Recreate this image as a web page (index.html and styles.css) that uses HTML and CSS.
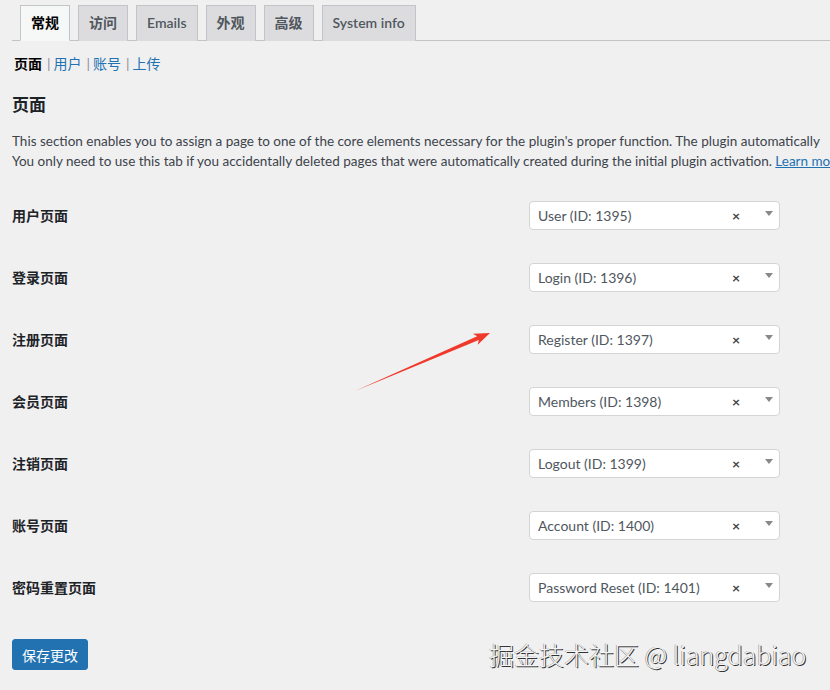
FILE: index.html
```html
<!DOCTYPE html>
<html lang="zh-CN">
<head>
    <meta charset="UTF-8">
    <title>设置</title>
    <link rel="stylesheet" href="styles.css">
</head>
<body>
<div class="wrap">
    <nav class="nav-tabs">
        <a class="nav-tab active">常规</a>
        <a class="nav-tab">访问</a>
        <a class="nav-tab">Emails</a>
        <a class="nav-tab">外观</a>
        <a class="nav-tab">高级</a>
        <a class="nav-tab">System info</a>
    </nav>

    <ul class="subsubsub">
        <li class="current">页面</li>
        <li><span class="sep">|</span><a href="#">用户</a></li>
        <li><span class="sep">|</span><a href="#">账号</a></li>
        <li><span class="sep">|</span><a href="#">上传</a></li>
    </ul>

    <h2 class="section-title">页面</h2>
    <p class="section-desc">This section enables you to assign a page to one of the core elements necessary for the plugin's proper function. The plugin automatically<br>You only need to use this tab if you accidentally deleted pages that were automatically created during the initial plugin activation. <a href="#">Learn more</a></p>

    <div class="form-table">
        <div class="row">
            <label>用户页面</label>
            <div class="select"><span class="value">User (ID: 1395)</span><span class="clear">×</span><span class="caret"></span></div>
        </div>
        <div class="row">
            <label>登录页面</label>
            <div class="select"><span class="value">Login (ID: 1396)</span><span class="clear">×</span><span class="caret"></span></div>
        </div>
        <div class="row">
            <label>注册页面</label>
            <div class="select"><span class="value">Register (ID: 1397)</span><span class="clear">×</span><span class="caret"></span></div>
        </div>
        <div class="row">
            <label>会员页面</label>
            <div class="select"><span class="value">Members (ID: 1398)</span><span class="clear">×</span><span class="caret"></span></div>
        </div>
        <div class="row">
            <label>注销页面</label>
            <div class="select"><span class="value">Logout (ID: 1399)</span><span class="clear">×</span><span class="caret"></span></div>
        </div>
        <div class="row">
            <label>账号页面</label>
            <div class="select"><span class="value">Account (ID: 1400)</span><span class="clear">×</span><span class="caret"></span></div>
        </div>
        <div class="row">
            <label>密码重置页面</label>
            <div class="select"><span class="value">Password Reset (ID: 1401)</span><span class="clear">×</span><span class="caret"></span></div>
        </div>
    </div>

    <button class="button-primary">保存更改</button>
</div>

<!-- annotation arrow -->
<svg class="annot-arrow" width="830" height="690" viewBox="0 0 830 690">
    <polygon points="355,391 477.2,336.3 472.9,333.8 490,333 477.7,344.8 478.8,339.9" fill="#f0382b"/>
</svg>

<div class="watermark">掘金技术社区 @ liangdabiao</div>
</body>
</html>
```

FILE: styles.css
```css
html, body {
    margin: 0;
    padding: 0;
    overflow: hidden;
}
body {
    background: #f0f0f1;
    font-family: Lato, "Noto Sans CJK SC", sans-serif;
    color: #1d2327;
    font-size: 13px;
    width: 830px;
    height: 690px;
    position: relative;
}
.wrap {
    padding: 0 0 0 12px;
}
a {
    color: #2271b1;
}
.nav-tabs {
    display: flex;
    padding: 5px 0 0 8px;
    border-bottom: 1px solid #c3c4c7;
    height: 35px;
}
.nav-tab {
    display: block;
    box-sizing: border-box;
    height: 36px;
    padding: 5px 10px;
    margin-right: 8px;
    font-size: 14px;
    line-height: 24px;
    font-weight: 600;
    color: #50575e;
    background: #dcdcde;
    border: 1px solid #c3c4c7;
    border-bottom: none;
}
.nav-tab.active {
    background: #f6f7f7;
    color: #000;
    border-bottom: 1px solid #f6f7f7;
}
.subsubsub {
    list-style: none;
    display: flex;
    margin: 13px 0 0 2px;
    padding: 0;
    font-size: 14px;
    line-height: 20px;
}
.subsubsub li {
    margin-right: 5px;
}
.subsubsub .current {
    font-weight: 700;
    color: #000;
}
.subsubsub a {
    text-decoration: none;
}
.subsubsub .sep {
    color: #8c8f94;
    margin-right: 3px;
}
.section-title {
    font-size: 17px;
    line-height: 24px;
    font-weight: 700;
    margin: 19px 0 14px;
}
.section-desc {
    margin: 0;
    font-size: 13.5px;
    line-height: 20px;
    white-space: nowrap;
    color: #3c434a;
}
.form-table {
    margin-top: 13px;
}
.row {
    display: grid;
    grid-template-columns: 517px 251px;
    align-items: center;
    height: 62px;
}
.row label {
    font-size: 14px;
    font-weight: 700;
    color: #1d2327;
}
.select {
    display: flex;
    align-items: center;
    box-sizing: border-box;
    height: 29px;
    background: #fff;
    border: 1px solid #d3d4d6;
    border-radius: 4px;
    padding: 0 0 0 8px;
    font-size: 14px;
    color: #50575e;
}
.select .value {
    flex: 1;
}
.select .clear {
    font-size: 14px;
    font-weight: 700;
    color: #444;
    width: 14px;
    text-align: center;
}
.select .caret {
    width: 0;
    height: 0;
    border-left: 4px solid transparent;
    border-right: 4px solid transparent;
    border-top: 5px solid #888;
    margin: 0 6px 0 22px;
    position: relative;
    top: -2px;
}
.button-primary {
    margin-top: 21px;
    height: 31px;
    width: 76px;
    background: #2271b1;
    color: #fff;
    border: 1px solid #2271b1;
    border-radius: 3px;
    font-family: "Noto Sans CJK SC", sans-serif;
    font-size: 14px;
    padding: 0;
}
.annot-arrow {
    position: absolute;
    left: 0;
    top: 0;
    pointer-events: none;
}
.watermark {
    position: absolute;
    left: 489px;
    top: 637px;
    font-family: "Noto Sans CJK SC", sans-serif;
    font-weight: 300;
    font-size: 25px;
    line-height: 34px;
    color: #f4f4f4;
    text-shadow: 1px 1px 0 #333, -0.5px -0.5px 0 #888;
    white-space: nowrap;
}
```
